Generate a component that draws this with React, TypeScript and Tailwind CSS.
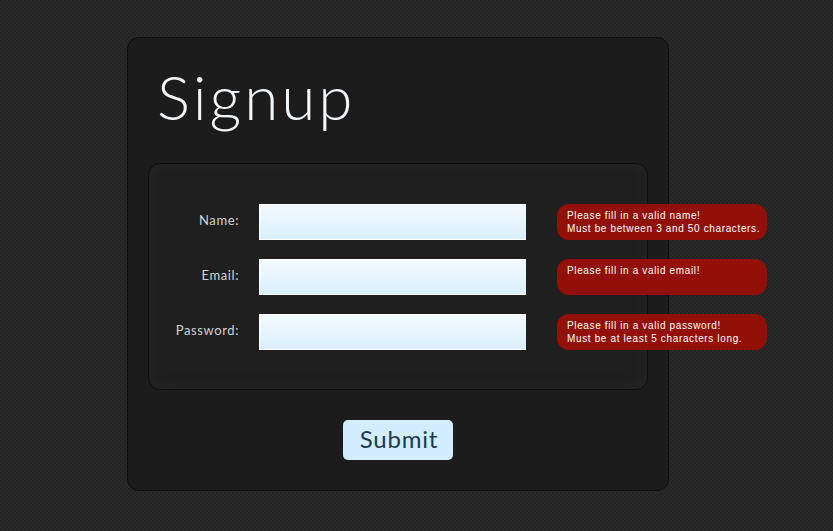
import React from 'react';

const fields = [
  { label: 'Name:', type: 'text', lines: ['Please fill in a valid name!', 'Must be between 3 and 50 characters.'] },
  { label: 'Email:', type: 'text', lines: ['Please fill in a valid email!'] },
  { label: 'Password:', type: 'password', lines: ['Please fill in a valid password!', 'Must be at least 5 characters long.'] },
];

export default function App() {
  return (
    <div className="min-h-[531px] bg-[#262626] bg-[repeating-conic-gradient(#2a2a2a_0%_25%,#232323_0%_50%)] bg-[length:4px_4px] pt-[37px] font-['Lato',sans-serif]">
      <div className="ml-[127px] h-[454px] w-[542px] rounded-xl border border-[#0c0c0c] bg-[#1c1c1c] px-5 pt-[14px]">
        <h1 className="ml-[9px] h-[111px] text-[62px] font-light leading-[88px] tracking-[3px] text-[#f2f6fa]">Signup</h1>
        <form>
          <div className="flex h-[227px] w-[500px] flex-col gap-[19px] rounded-xl border border-[#0e0e0e] bg-[#1f1f1f] pt-10 shadow-[inset_0_0_14px_#272727]">
            {fields.map(field => (
              <div key={field.label} className="flex h-9 items-center">
                <label className="mb-0.5 w-[90px] shrink-0 text-right text-[13px] tracking-[0.6px] text-[#d2d2d2]">{field.label}</label>
                <input
                  type={field.type}
                  className="ml-5 h-9 w-[267px] shrink-0 border border-r-0 border-white bg-gradient-to-b from-[#f3faff] to-[#dcefff] outline-none"
                />
                <div className="ml-[31px] h-9 w-[210px] shrink-0 rounded-xl bg-[#931008] px-2.5 pt-[5px] font-['Liberation_Sans',sans-serif] text-[10px] leading-[13px] tracking-[0.64px] whitespace-nowrap text-white">
                  {field.lines.map(line => (
                    <div key={line}>{line}</div>
                  ))}
                </div>
              </div>
            ))}
          </div>
          <div className="mt-[30px] flex justify-center">
            <button type="button" className="h-10 w-[110px] rounded-[5px] bg-[#d4ecff] pb-0.5 pl-0.5 text-2xl tracking-[0.8px] text-[#1a3a52]">
              Submit
            </button>
          </div>
        </form>
      </div>
    </div>
  );
}
